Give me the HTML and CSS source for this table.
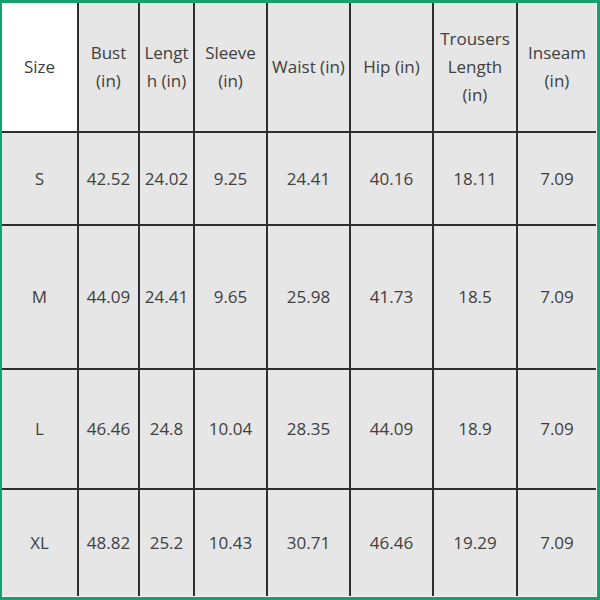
FILE: index.html
```html
<!DOCTYPE html>
<html>
<head>
<meta charset="utf-8">
<link rel="stylesheet" href="styles.css">
</head>
<body>
<div class="frame">
  <div class="grid">
    <div class="cell head white">Size</div>
    <div class="cell head">Bust<br>(in)</div>
    <div class="cell head">Lengt<br>h (in)</div>
    <div class="cell head">Sleeve<br>(in)</div>
    <div class="cell head">Waist (in)</div>
    <div class="cell head">Hip (in)</div>
    <div class="cell head">Trousers<br>Length<br>(in)</div>
    <div class="cell head">Inseam<br>(in)</div>

    <div class="cell">S</div>
    <div class="cell">42.52</div>
    <div class="cell">24.02</div>
    <div class="cell">9.25</div>
    <div class="cell">24.41</div>
    <div class="cell">40.16</div>
    <div class="cell">18.11</div>
    <div class="cell">7.09</div>

    <div class="cell">M</div>
    <div class="cell">44.09</div>
    <div class="cell">24.41</div>
    <div class="cell">9.65</div>
    <div class="cell">25.98</div>
    <div class="cell">41.73</div>
    <div class="cell">18.5</div>
    <div class="cell">7.09</div>

    <div class="cell">L</div>
    <div class="cell">46.46</div>
    <div class="cell">24.8</div>
    <div class="cell">10.04</div>
    <div class="cell">28.35</div>
    <div class="cell">44.09</div>
    <div class="cell">18.9</div>
    <div class="cell">7.09</div>

    <div class="cell">XL</div>
    <div class="cell">48.82</div>
    <div class="cell">25.2</div>
    <div class="cell">10.43</div>
    <div class="cell">30.71</div>
    <div class="cell">46.46</div>
    <div class="cell">19.29</div>
    <div class="cell">7.09</div>
  </div>
</div>
</body>
</html>
```
FILE: styles.css
```css
html, body {
  margin: 0;
  padding: 0;
  background: #ffffff;
}
.frame {
  width: 600px;
  height: 600px;
  box-sizing: border-box;
  border-style: solid;
  border-color: #15a06e;
  border-width: 3px 3px 3px 2px;
  background: #f4f4f4;
}
.grid {
  display: grid;
  grid-template-columns: 75px 59px 53px 71px 81px 81px 82px 78px;
  grid-template-rows: 128px 91px 142px 118px 106px;
  gap: 2px;
  background: #2e2e2e;
  width: 594px;
  height: 593px;
}
.cell {
  background: #e6e6e6;
  display: flex;
  align-items: center;
  justify-content: center;
  text-align: center;
  font-family: "Open Sans", "Noto Sans", sans-serif;
  font-size: 17px;
  line-height: 28px;
  color: #404040;
  white-space: nowrap;
}
.white {
  background: #ffffff;
}
```
